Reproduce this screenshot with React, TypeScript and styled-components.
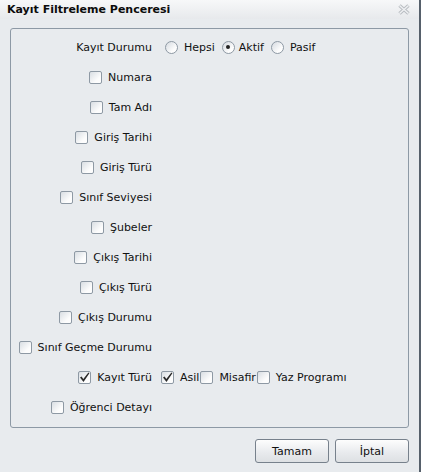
import { Fragment } from "react";
import styled, { createGlobalStyle } from "styled-components";

const GlobalStyle = createGlobalStyle`
  body {
    margin: 0;
    background: #ffffff;
  }
`;

const Window = styled.div`
  width: 419px;
  height: 472px;
  border-right: 2px solid #56606b;
  background: #e8ebee;
  display: flex;
  flex-direction: column;
  font-family: "DejaVu Sans", "Liberation Sans", sans-serif;
  font-size: 11px;
  color: #111;
`;

const TitleBar = styled.div`
  height: 19px;
  display: flex;
  align-items: center;
  justify-content: space-between;
  padding: 0 9px 0 7px;
  background: linear-gradient(#f7f8f9, #e7e9ec);
  font-weight: bold;
  color: #0c0c0c;
`;

const Body = styled.div`
  padding: 9px 10px 0 10px;
`;

const Panel = styled.div`
  border: 1px solid #8d99a5;
  border-radius: 3px;
  display: grid;
  grid-template-columns: 141px 1fr;
  grid-auto-rows: 30px;
  column-gap: 9px;
  padding: 3px 0 5px;
`;

const LabelCell = styled.div`
  display: flex;
  justify-content: flex-end;
  align-items: center;
  gap: 6px;
  white-space: nowrap;
`;

const ValueCell = styled.div`
  display: flex;
  align-items: center;
  white-space: nowrap;
`;

const RadioGroup = styled.div`
  display: flex;
  align-items: center;
  gap: 7px;
  margin-left: 4px;
`;

const Option = styled.label<{ $gap?: number }>`
  display: flex;
  align-items: center;
  gap: ${(p) => p.$gap ?? 6}px;
`;

const OptionRow = styled.div`
  display: flex;
  align-items: center;
  gap: 1px;
`;

const Box = styled.span`
  width: 13px;
  height: 13px;
  box-sizing: border-box;
  border: 1px solid #8e99a4;
  border-radius: 2px;
  background: linear-gradient(135deg, #d9dee3, #fdfdfd 70%);
  display: inline-flex;
  align-items: center;
  justify-content: center;
  flex-shrink: 0;
`;

const Round = styled.span`
  width: 13px;
  height: 13px;
  box-sizing: border-box;
  border: 1px solid #8e99a4;
  border-radius: 50%;
  background: linear-gradient(135deg, #d5dae0, #fdfdfd 70%);
  display: inline-flex;
  align-items: center;
  justify-content: center;
  flex-shrink: 0;
`;

const Dot = styled.span`
  width: 4px;
  height: 4px;
  border-radius: 50%;
  background: #222;
`;

const Footer = styled.div`
  display: flex;
  justify-content: flex-end;
  gap: 6px;
  padding: 11px 10px 0 0;
`;

const Button = styled.button`
  width: 74px;
  height: 24px;
  border: 1px solid #77818c;
  border-radius: 3px;
  background: linear-gradient(#fdfdfd, #e9ebee 55%, #dde0e3);
  font-family: inherit;
  font-size: 11px;
  color: #111;
  padding: 0;
`;

const Check = ({ checked }: { checked?: boolean }) => (
  <Box>
    {checked && (
      <svg width="11" height="11" viewBox="0 0 11 11">
        <polygon points="1,5.6 2.6,4.6 4.3,7 9.4,0.6 10.4,1.3 4.5,10" fill="#2a2a2a" />
      </svg>
    )}
  </Box>
);

const Radio = ({ checked }: { checked?: boolean }) => <Round>{checked && <Dot />}</Round>;

const CloseIcon = () => (
  <svg width="12" height="11" viewBox="0 0 12 11">
    <path d="M1.5 1.5 L10.5 9.5 M10.5 1.5 L1.5 9.5" stroke="#b9bdc2" strokeWidth="3.4" fill="none" />
    <path d="M1.5 1.5 L10.5 9.5 M10.5 1.5 L1.5 9.5" stroke="#eff1f3" strokeWidth="1.4" fill="none" />
  </svg>
);

const fields = [
  "Numara",
  "Tam Adı",
  "Giriş Tarihi",
  "Giriş Türü",
  "Sınıf Seviyesi",
  "Şubeler",
  "Çıkış Tarihi",
  "Çıkış Türü",
  "Çıkış Durumu",
  "Sınıf Geçme Durumu",
];

export default function App() {
  return (
    <>
      <GlobalStyle />
      <Window>
        <TitleBar>
          <span>Kayıt Filtreleme Penceresi</span>
          <CloseIcon />
        </TitleBar>
        <Body>
          <Panel>
            <LabelCell>Kayıt Durumu</LabelCell>
            <ValueCell>
              <RadioGroup>
                <Option>
                  <Radio /> Hepsi
                </Option>
                <Option $gap={4}>
                  <Radio checked /> Aktif
                </Option>
                <Option>
                  <Radio /> Pasif
                </Option>
              </RadioGroup>
            </ValueCell>

            {fields.map((f) => (
              <Fragment key={f}>
                <LabelCell>
                  <Check /> {f}
                </LabelCell>
                <ValueCell />
              </Fragment>
            ))}

            <LabelCell>
              <Check checked /> Kayıt Türü
            </LabelCell>
            <ValueCell>
              <OptionRow>
                <Option>
                  <Check checked /> Asil
                </Option>
                <Option>
                  <Check /> Misafir
                </Option>
                <Option>
                  <Check /> Yaz Programı
                </Option>
              </OptionRow>
            </ValueCell>

            <LabelCell>
              <Check /> Öğrenci Detayı
            </LabelCell>
            <ValueCell />
          </Panel>
        </Body>
        <Footer>
          <Button>Tamam</Button>
          <Button>İptal</Button>
        </Footer>
      </Window>
    </>
  );
}
